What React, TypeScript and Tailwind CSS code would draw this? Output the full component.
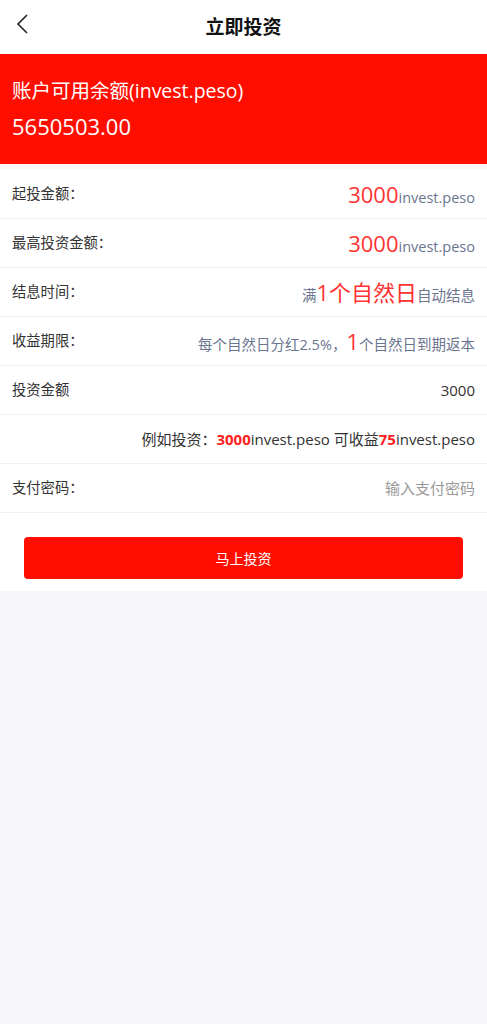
import React from "react";

const font = { fontFamily: '"Open Sans", "Noto Sans CJK SC", "Noto Sans", sans-serif' };

function Row({ label, children }: { label?: string; children: React.ReactNode }) {
  return (
    <div className="flex h-[49px] items-center justify-between border-b border-[#eef0f3] bg-white px-3">
      <span className="text-[14.3px] text-[#333]">{label}</span>
      <div className="flex items-baseline">{children}</div>
    </div>
  );
}

export default function App() {
  return (
    <div className="min-h-[1024px] bg-[#f7f7fa]" style={font}>
      <div className="relative flex h-[54px] items-center justify-center bg-white">
        <svg className="absolute left-[14px] top-[13px]" width="16" height="22" viewBox="0 0 16 22">
          <path d="M13 2 L4 11 L13 20" fill="none" stroke="#222" strokeWidth="1.6" />
        </svg>
        <span className="text-[19px] font-bold text-[#111]">立即投资</span>
      </div>
      <div className="flex h-[110px] flex-col justify-center gap-[8px] bg-[#ff0e00] px-3 text-white">
        <div className="text-[19.5px] leading-[26px]">账户可用余额(invest.peso)</div>
        <div className="text-[22px] leading-[28px]">5650503.00</div>
      </div>
      <div className="h-[6px]" />
      <div className="bg-white">
        <Row label="起投金额：">
          <span className="text-[22px] text-[#ff3333]">3000</span>
          <span className="text-[14.5px] text-[#6b7590]">invest.peso</span>
        </Row>
        <Row label="最高投资金额：">
          <span className="text-[22px] text-[#ff3333]">3000</span>
          <span className="text-[14.5px] text-[#6b7590]">invest.peso</span>
        </Row>
        <Row label="结息时间：">
          <span className="text-[14.5px] text-[#6b7590]">满</span>
          <span className="text-[22px] text-[#ff3333]">1个自然日</span>
          <span className="text-[14.5px] text-[#6b7590]">自动结息</span>
        </Row>
        <Row label="收益期限：">
          <span className="text-[14.5px] text-[#6b7590]">每个自然日分红2.5%，</span>
          <span className="text-[22px] text-[#ff3333]">1</span>
          <span className="text-[14.5px] text-[#6b7590]">个自然日到期返本</span>
        </Row>
        <Row label="投资金额">
          <span className="text-[15px] text-[#333]">3000</span>
        </Row>
        <Row label="">
          <span className="text-[15px] text-[#333]">
            例如投资：<b className="font-bold text-[#ff2020]">3000</b>invest.peso 可收益
            <b className="font-bold text-[#ff2020]">75</b>invest.peso
          </span>
        </Row>
        <Row label="支付密码：">
          <span className="text-[15px] text-[#999]">输入支付密码</span>
        </Row>
        <div className="px-6 pb-3 pt-6">
          <button className="h-[42px] w-full rounded-[4px] bg-[#ff0e00] text-[14px] text-white">马上投资</button>
        </div>
      </div>
    </div>
  );
}
